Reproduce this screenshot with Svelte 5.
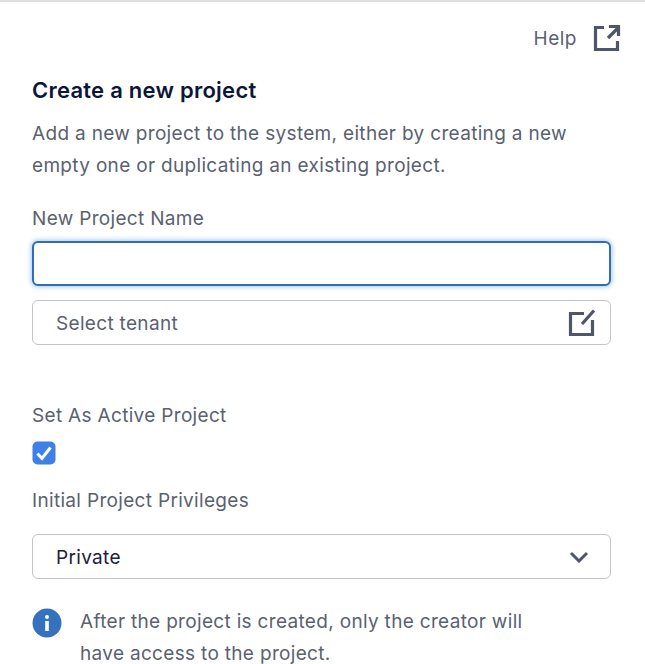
<script>
  let name = $state('');
</script>

<div class="page">
  <div class="help">
    <span>Help</span>
    <svg width="28" height="28" viewBox="0 0 28 28" fill="none" stroke="#4f566b" stroke-width="3.2">
      <path d="M11 3.5H2.5V25.5H24.5V17" />
      <path d="M15 14L25 4" />
      <path d="M16 2.5H25.5V12" />
    </svg>
  </div>
  <h1>Create a new project</h1>
  <p class="desc">Add a new project to the system, either by creating a new empty one or duplicating an existing project.</p>
  <label class="lbl first" for="pname">New Project Name</label>
  <input id="pname" class="name" bind:value={name} />
  <div class="field tenant">
    <span>Select tenant</span>
    <svg width="28" height="28" viewBox="0 0 28 28" fill="none" stroke="#4f566b" stroke-width="3.2">
      <path d="M16 4.5H2.5V25.5H24.5V11" />
      <path d="M14 15L26 1.5" />
    </svg>
  </div>
  <div class="lbl active">Set As Active Project</div>
  <div class="check">
    <svg width="24" height="24" viewBox="0 0 24 24">
      <rect x="0.5" y="0.5" width="23" height="23" rx="5" fill="#3f7fe8" />
      <path d="M5.5 12.5L10 17.5L18.5 6.5" fill="none" stroke="#fff" stroke-width="3" />
    </svg>
  </div>
  <div class="lbl priv">Initial Project Privileges</div>
  <div class="field select">
    <span>Private</span>
    <svg width="20" height="12" viewBox="0 0 20 12" fill="none" stroke="#4f566b" stroke-width="3">
      <path d="M2 2L10 10L18 2" />
    </svg>
  </div>
  <div class="note">
    <svg width="30" height="30" viewBox="0 0 30 30">
      <circle cx="15" cy="15" r="14.5" fill="#3572bd" />
      <circle cx="15" cy="9" r="2" fill="#fff" />
      <rect x="13.2" y="13" width="3.6" height="10" fill="#fff" />
    </svg>
    <p>After the project is created, only the creator will have access to the project.</p>
  </div>
</div>

<style>
  :global(body) {
    margin: 0;
    background: #fff;
    overflow: hidden;
  }
  .page {
    box-sizing: border-box;
    height: 664px;
    overflow: hidden;
    border-top: 2px solid #dfdfe1;
    padding: 0 34px 0 32px;
    font-family: Inter, sans-serif;
    font-size: 19px;
    letter-spacing: 0.32px;
    color: #5a6171;
  }
  .help {
    display: flex;
    justify-content: flex-end;
    align-items: center;
    gap: 16px;
    margin-top: 23px;
    margin-right: -10px;
    height: 28px;
    line-height: 28px;
    letter-spacing: 0.5px;
  }
  .help svg {
    margin-top: -2px;
  }
  h1 {
    margin: 22px 0 0;
    font-size: 22px;
    line-height: 30px;
    font-weight: 600;
    color: #0b1638;
    letter-spacing: 0.25px;
  }
  .desc {
    margin: 13px 0 0;
    line-height: 32px;
  }
  .lbl {
    display: block;
    line-height: 28px;
  }
  .first {
    margin-top: 23px;
  }
  .name {
    display: block;
    box-sizing: border-box;
    width: 100%;
    height: 45px;
    margin-top: 8px;
    border: 2px solid #2f6db8;
    border-radius: 6px;
    box-shadow: 0 0 5px 1px #a5c8ef;
    outline: none;
    background: #fff;
  }
  .field {
    display: flex;
    align-items: center;
    justify-content: space-between;
    box-sizing: border-box;
    height: 45px;
    border: 1.5px solid #c1c5cc;
    border-radius: 6px;
    padding: 0 14px 0 23px;
    background: #fff;
  }
  .field span {
    padding-top: 2px;
  }
  .tenant {
    margin-top: 14px;
  }
  .active {
    margin-top: 57px;
  }
  .check {
    display: flex;
    margin-top: 11px;
    height: 24px;
  }
  .priv {
    margin-top: 22px;
  }
  .select {
    margin-top: 19px;
    color: #1a2238;
    padding-right: 21px;
  }
  .note {
    display: flex;
    align-items: flex-start;
    gap: 18px;
    margin-top: 27px;
    padding-right: 80px;
  }
  .note svg {
    flex: none;
    margin-top: 2px;
  }
  .note p {
    margin: 0;
    line-height: 32px;
  }
</style>
